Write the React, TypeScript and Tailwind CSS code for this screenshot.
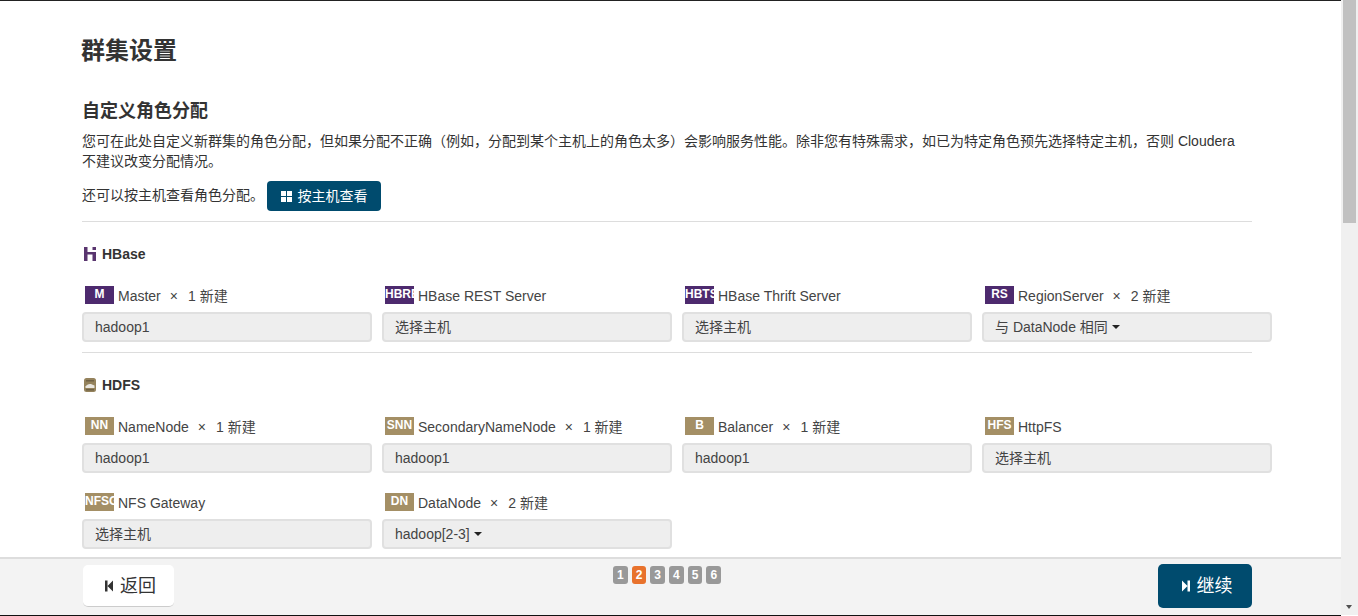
const font = { fontFamily: '"Liberation Sans", "Noto Sans CJK SC", sans-serif' };

type Role = {
  badge: string;
  name: string;
  count?: string;
  value: string;
  caret?: boolean;
};

const hbaseRoles: Role[] = [
  { badge: "M", name: "Master", count: "1 新建", value: "hadoop1" },
  { badge: "HBREST", name: "HBase REST Server", value: "选择主机" },
  { badge: "HBTS", name: "HBase Thrift Server", value: "选择主机" },
  { badge: "RS", name: "RegionServer", count: "2 新建", value: "与 DataNode 相同", caret: true },
];

const hdfsRoles: Role[] = [
  { badge: "NN", name: "NameNode", count: "1 新建", value: "hadoop1" },
  { badge: "SNN", name: "SecondaryNameNode", count: "1 新建", value: "hadoop1" },
  { badge: "B", name: "Balancer", count: "1 新建", value: "hadoop1" },
  { badge: "HFS", name: "HttpFS", value: "选择主机" },
  { badge: "NFSGW", name: "NFS Gateway", value: "选择主机" },
  { badge: "DN", name: "DataNode", count: "2 新建", value: "hadoop[2-3]", caret: true },
];

function RoleCell({ role, tone }: { role: Role; tone: "purple" | "tan" }) {
  const toneClass = tone === "purple" ? "bg-[#4d2a6e]" : "bg-[#a48f65]";
  return (
    <div className="w-[290px]">
      <div className="flex h-[18px] items-center pl-[3px] text-sm leading-[18px] text-[#444]">
        <span
          className={`${toneClass} mr-[3px] block h-[18px] w-[29px] shrink-0 overflow-hidden whitespace-nowrap text-center text-xs leading-[16px] font-bold text-white`}
        >
          {role.badge}
        </span>
        <span className="mt-[2px] ml-[1px]">{role.name}</span>
        {role.count ? (
          <>
            <span className="mt-[2px] mr-[10px] ml-[9px]">×</span>
            <span className="mt-[2px]">{role.count}</span>
          </>
        ) : null}
      </div>
      <div className="mt-2 flex h-[30px] items-center rounded border-2 border-[#e0e0e0] bg-[#eee] px-[11px] text-sm text-[#444]">
        {role.value}
        {role.caret ? (
          <span className="ml-1 inline-block border-x-4 border-t-4 border-x-transparent border-t-[#222]" />
        ) : null}
      </div>
    </div>
  );
}

function HBaseIcon() {
  return (
    <svg width="12" height="14" viewBox="0 0 12 14" className="ml-[2px] block">
      <path d="M0 0h3.500v5H12v9H8.500V7.500H3.500V14H0z" fill="#59356f" />
      <rect x="8.500" y="0" width="3.500" height="3" fill="#59356f" />
    </svg>
  );
}

function HdfsIcon() {
  return (
    <svg width="12" height="14" viewBox="0 0 12 14" className="ml-[2px] block">
      <rect x="0" y="0" width="12" height="14" rx="2.500" fill="#94825c" />
      <path d="M1.500 8.500c2-3 5-3.500 9-1v2.500h-9z" fill="#e9e6df" />
      <rect x="2" y="2" width="8" height="1.500" fill="#6f6145" />
      <rect x="2" y="11" width="8" height="1.500" fill="#6f6145" />
    </svg>
  );
}

function ServiceSection({
  title,
  icon,
  roles,
  tone,
}: {
  title: string;
  icon: React.ReactNode;
  roles: Role[];
  tone: "purple" | "tan";
}) {
  return (
    <section>
      <div className="flex h-5 items-center gap-[6px] text-sm font-bold text-[#333]">
        {icon}
        {title}
      </div>
      <div className="mt-[22px] grid w-[1200px] grid-cols-[repeat(4,290px)] gap-x-[10px] gap-y-5">
        {roles.map((role) => (
          <RoleCell key={role.name} role={role} tone={tone} />
        ))}
      </div>
    </section>
  );
}

function StepIcon({ forward, color }: { forward?: boolean; color: string }) {
  return (
    <svg width="8" height="12" viewBox="0 0 8 12" className="block">
      {forward ? (
        <path d="M0 0.500 L5.500 6 L0 11.500Z M5.500 0.500H8V11.500H5.500Z" fill={color} />
      ) : (
        <path d="M0 0.500H2.500V11.500H0Z M8 0.500V11.500L2.500 6Z" fill={color} />
      )}
    </svg>
  );
}

export default function App() {
  return (
    <div className="flex h-[616px] w-[1358px] overflow-hidden bg-white" style={font}>
      <div className="flex w-[1341px] flex-col border-t border-b border-t-[#222] border-b-[#111]">
        <main className="h-[556px] overflow-hidden pl-[82px]">
          <h1 className="mt-[35px] -ml-px text-2xl leading-[30px] font-bold text-[#333]">群集设置</h1>
          <h2 className="mt-[35px] text-lg leading-5 font-bold text-[#333]">自定义角色分配</h2>
          <p className="mt-[10px] w-[1170px] text-sm leading-5 text-[#333]">
            您可在此处自定义新群集的角色分配，但如果分配不正确（例如，分配到某个主机上的角色太多）会影响服务性能。除非您有特殊需求，如已为特定角色预先选择特定主机，否则 Cloudera 不建议改变分配情况。
          </p>
          <div className="mt-[9px] flex items-start text-sm leading-[30px] text-[#333]">
            还可以按主机查看角色分配。
            <button className="mt-px ml-[3px] flex h-[30px] w-[114px] items-center justify-center gap-[6px] rounded bg-[#004b6e] text-sm text-white">
              <span className="grid grid-cols-2 gap-[1px]">
                <i className="block size-[5px] bg-white" />
                <i className="block size-[5px] bg-white" />
                <i className="block size-[5px] bg-white" />
                <i className="block size-[5px] bg-white" />
              </span>
              按主机查看
            </button>
          </div>
          <hr className="mt-[10px] mb-[22px] w-[1170px] border-[#ddd]" />
          <ServiceSection title="HBase" icon={<HBaseIcon />} roles={hbaseRoles} tone="purple" />
          <hr className="mt-[10px] mb-[22px] w-[1170px] border-[#ddd]" />
          <ServiceSection title="HDFS" icon={<HdfsIcon />} roles={hdfsRoles} tone="tan" />
        </main>
        <footer className="flex flex-1 items-start justify-between border-t-2 border-[#ddd] bg-[#f3f3f3] pr-[89px] pl-[83px]">
          <button className="mt-[6px] flex h-[42px] w-[91px] items-center justify-center gap-[7px] rounded-[5px] border-b border-[#ccc] bg-white pl-1 text-lg text-[#333]">
            <StepIcon color="#333" />
            返回
          </button>
          <div className="mt-[7px] ml-[2px] flex gap-1">
            {["1", "2", "3", "4", "5", "6"].map((n) => (
              <span
                key={n}
                className={`h-[18px] rounded-[3px] px-1 text-xs leading-[18px] font-bold text-white ${n === "2" ? "bg-[#e8722c]" : "bg-[#999]"}`}
              >
                {n}
              </span>
            ))}
          </div>
          <button className="mt-[5px] flex h-[44px] w-[94px] items-center justify-center gap-[7px] rounded-[5px] bg-[#004b6e] pl-1 text-lg text-white">
            <StepIcon forward color="#fff" />
            继续
          </button>
        </footer>
      </div>
      <div className="relative flex h-[615px] w-[17px] flex-col items-center bg-[#f0f0f0]">
        <div className="h-[223px] w-[13px] bg-[#c1c1c1]" />
        <span className="absolute bottom-[6px] left-[5px] border-x-[3.5px] border-t-[4px] border-x-transparent border-t-[#505050]" />
      </div>
    </div>
  );
}
